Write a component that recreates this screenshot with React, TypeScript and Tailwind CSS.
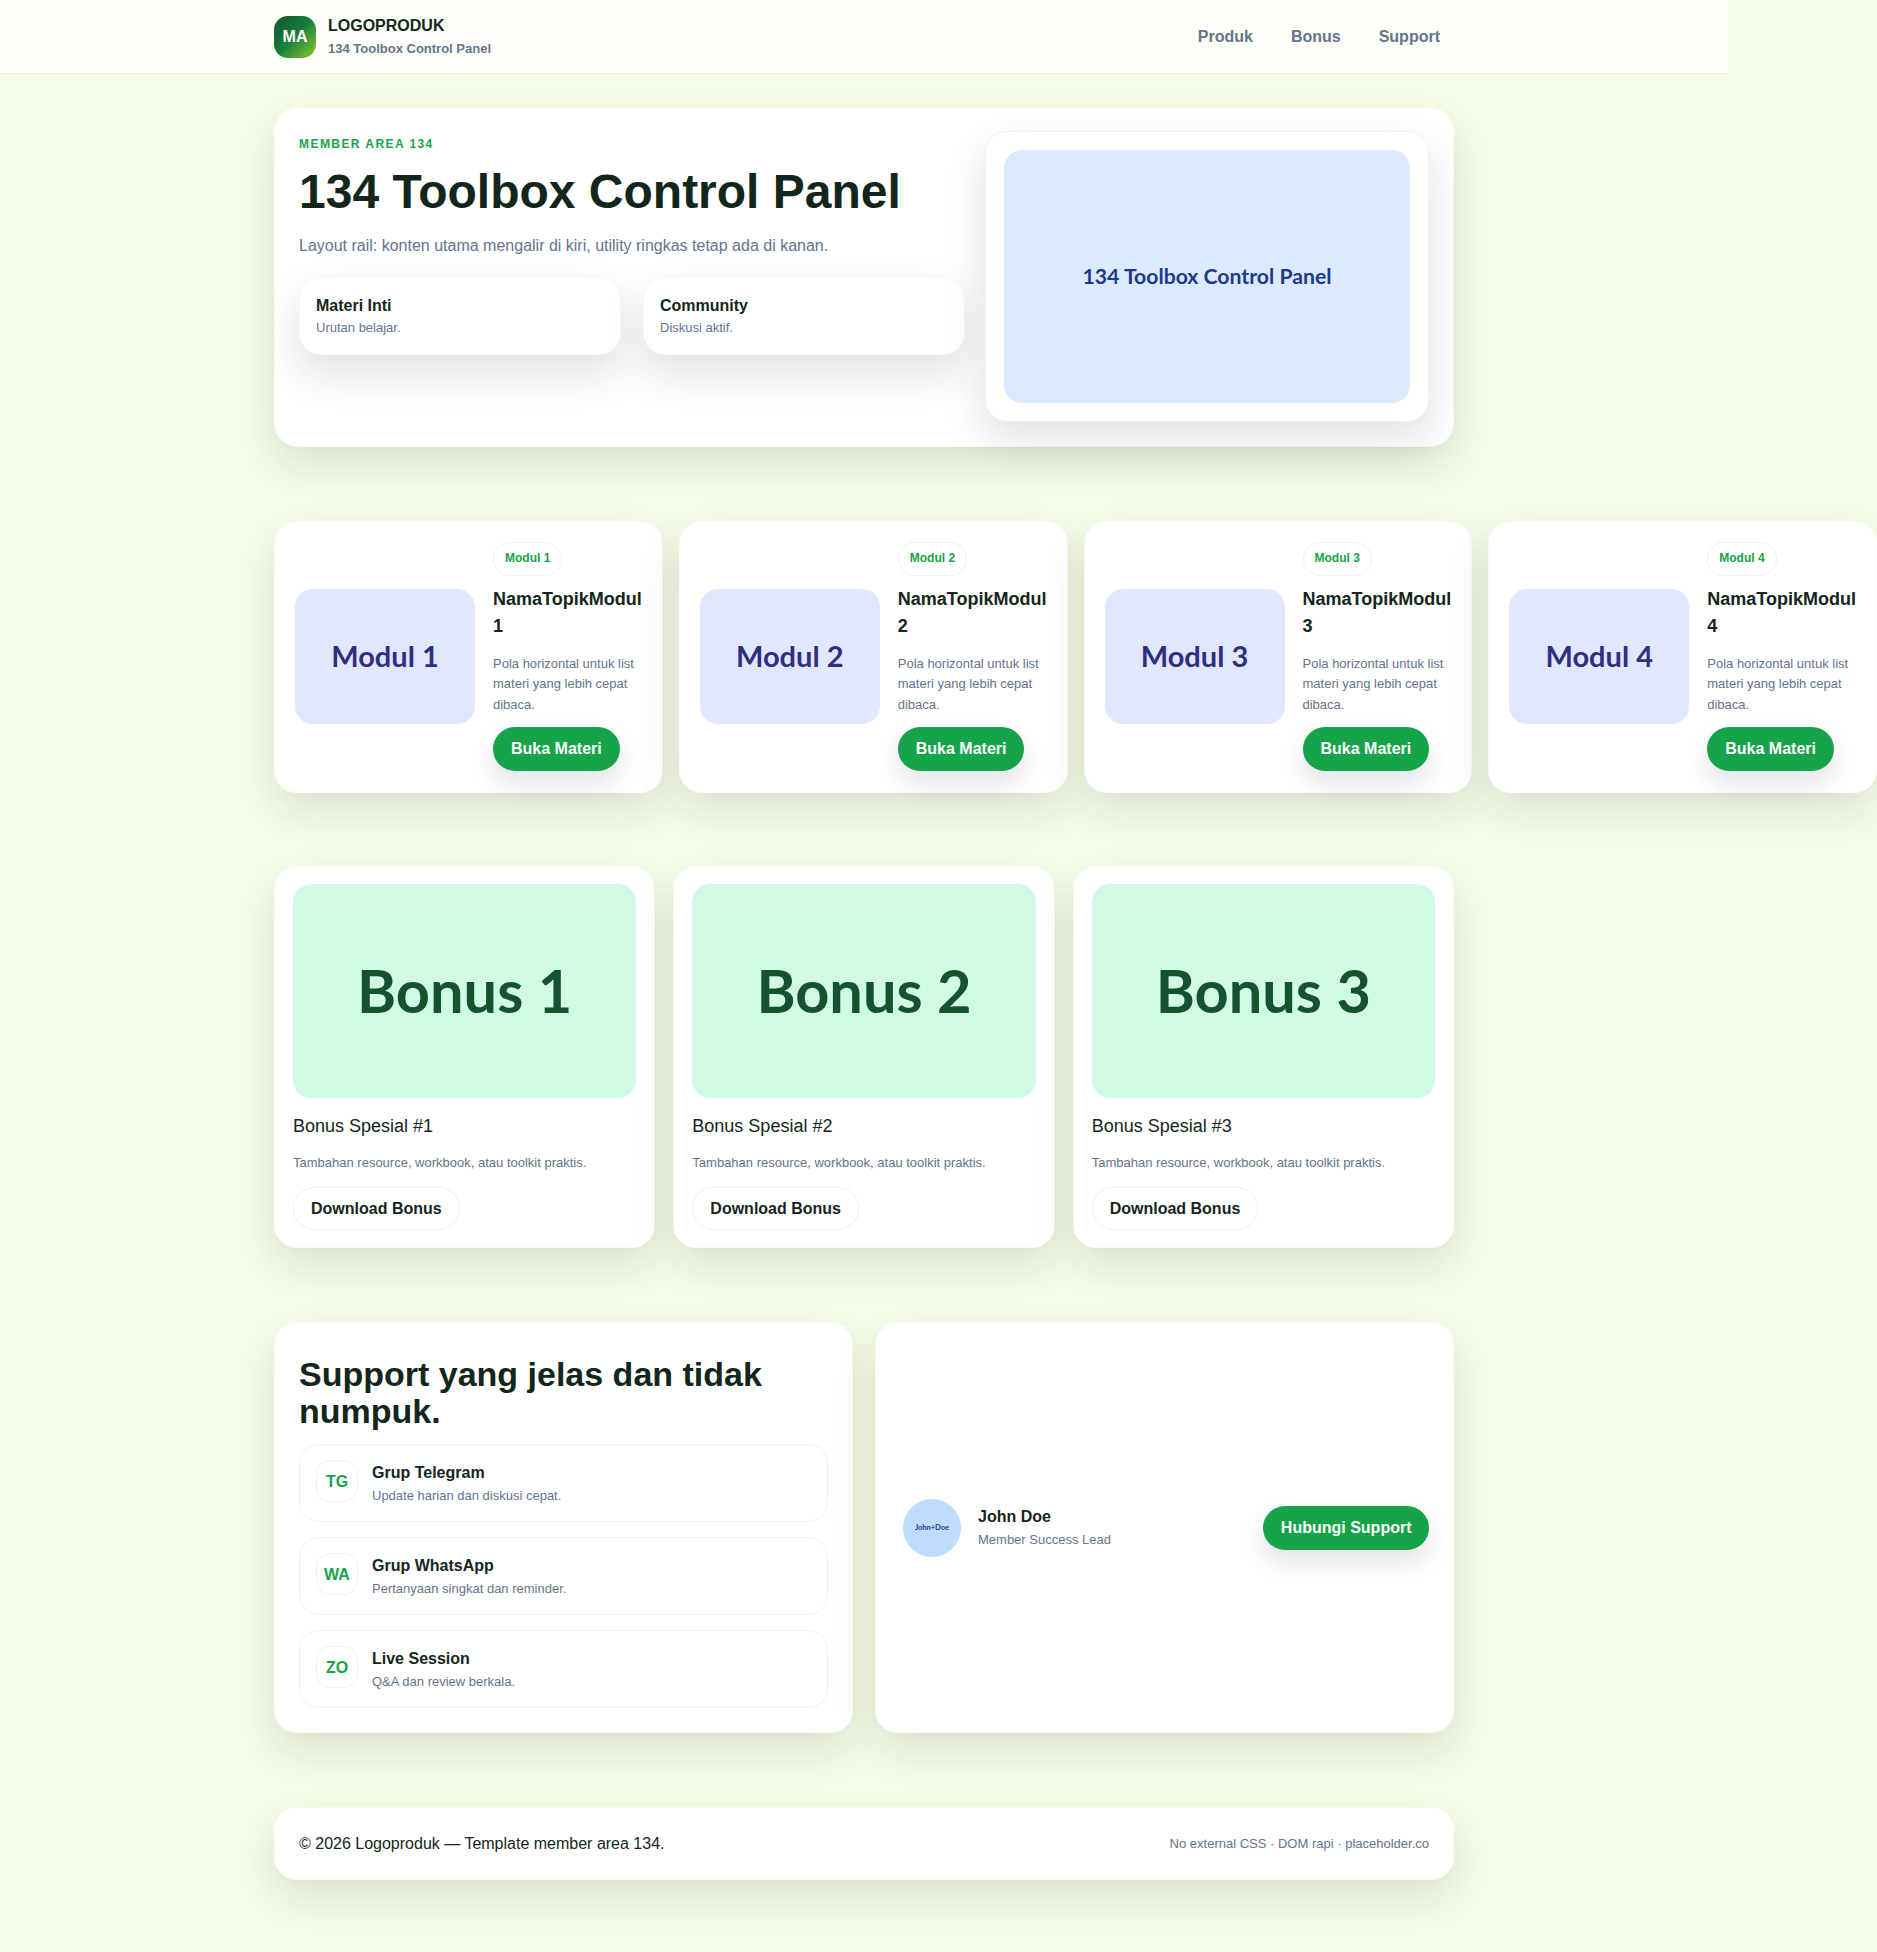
const modules = [1, 2, 3, 4];
const bonuses = [1, 2, 3];
const supports = [
  { code: "TG", title: "Grup Telegram", desc: "Update harian dan diskusi cepat." },
  { code: "WA", title: "Grup WhatsApp", desc: "Pertanyaan singkat dan reminder." },
  { code: "ZO", title: "Live Session", desc: "Q&A dan review berkala." },
];
const minis = [
  { title: "Materi Inti", desc: "Urutan belajar." },
  { title: "Community", desc: "Diskusi aktif." },
];

export default function App() {
  return (
    <div className="min-h-[1952px] w-full bg-[#f7fee7] font-['Liberation_Sans',Arial,sans-serif] text-[16px] leading-[1.6] text-[#13261c]">
      <div className="w-[1728px]">
        {/* Navbar */}
        <header className="h-[74px] border-b border-[#eef0ea] bg-[#fdfff9] shadow-[0_4px_4px_rgba(20,40,20,0.01)]">
          <div className="mx-auto flex h-full w-[1180px] items-center justify-between">
            <div className="flex items-center gap-3">
              <div className="flex h-[42px] w-[42px] items-center justify-center rounded-[14px] bg-gradient-to-br from-[#14532d] via-[#15803d] to-[#84cc16] text-[16px] font-bold text-white">
                MA
              </div>
              <div className="pt-px">
                <div className="text-[16px] leading-[1.3] font-bold">LOGOPRODUK</div>
                <div className="mt-[4px] text-[13px] leading-[1.3] font-bold text-[#64748b]">134 Toolbox Control Panel</div>
              </div>
            </div>
            <nav className="flex items-center gap-[38px] pr-[14px] text-[16px] font-bold text-[#64748b]">
              <a href="#">Produk</a>
              <a href="#">Bonus</a>
              <a href="#">Support</a>
            </nav>
          </div>
        </header>

        <main className="mx-auto flex w-[1180px] flex-col gap-[73.5px] pt-[33px]">
          {/* Hero */}
          <section className="grid h-[340px] grid-cols-[1.5fr_1fr] gap-5 rounded-[24px] border border-[#f8faf5] bg-white px-6 pt-[23px] pb-6 shadow-[0_18px_40px_rgba(15,23,42,0.13)]">
            <div>
              <div className="mt-[4px] text-[12px] leading-[1.6] font-bold tracking-[0.12em] text-[#16a34a] uppercase">Member Area 134</div>
              <h1 className="mt-[11.5px] text-[48px] leading-[1.1] font-bold text-[#13261c]">134 Toolbox Control Panel</h1>
              <p className="mt-[15px] text-[16px] text-[#64748b]">Layout rail: konten utama mengalir di kiri, utility ringkas tetap ada di kanan.</p>
              <div className="mt-[18px] grid grid-cols-2 gap-[22px]">
                {minis.map((m) => (
                  <div key={m.title} className="flex h-[78px] flex-col justify-center rounded-[22px] border border-[#f8faf9] bg-white px-4 shadow-[0_18px_40px_rgba(15,23,42,0.13)]">
                    <div className="text-[16px] font-bold">{m.title}</div>
                    <div className="text-[13px] text-[#64748b]">{m.desc}</div>
                  </div>
                ))}
              </div>
            </div>
            <div className="rounded-[22px] border border-[#f1f2f4] bg-white p-[18px] shadow-[0_18px_40px_rgba(15,23,42,0.13)]">
              <div className="flex h-full items-center justify-center rounded-[18px] bg-[#dbeafe] font-['Lato',sans-serif] text-[21.2px] font-bold text-[#1e3a8a]">
                134 Toolbox Control Panel
              </div>
            </div>
          </section>

          {/* Modules: the row runs past the container on purpose */}
          <section className="flex w-[1603px] gap-4">
            {modules.map((n) => (
              <article key={n} className="flex h-[272px] w-[388.75px] shrink-0 items-center gap-[18px] rounded-[22px] border border-[#f8faf5] bg-white p-5 shadow-[0_18px_40px_rgba(15,23,42,0.13)]">
                <div className="flex h-[135px] w-[180px] shrink-0 items-center justify-center rounded-[18px] bg-[#e0e7ff] font-['Lato',sans-serif] text-[29px] font-bold text-[#312e81]">
                  Modul {n}
                </div>
                <div className="min-w-0 flex-1">
                  <span className="flex h-[34px] w-fit items-center rounded-full border border-[#eef2ee] bg-white px-[11px] text-[12px] font-bold text-[#16a34a]">Modul {n}</span>
                  <h3 className="mt-[10.5px] text-[18px] leading-[27px] font-bold">NamaTopikModul {n}</h3>
                  <p className="mt-[13.5px] text-[13px] leading-[20.4px] text-[#64748b]">Pola horizontal untuk list materi yang lebih cepat dibaca.</p>
                  <button className="mt-[12px] block h-[44px] rounded-full bg-[#16a34a] px-[18px] text-[16px] font-bold text-white shadow-[0_12px_24px_rgba(15,23,42,0.12)]">Buka Materi</button>
                </div>
              </article>
            ))}
          </section>

          {/* Bonus */}
          <section className="grid grid-cols-3 gap-[18px]">
            {bonuses.map((n) => (
              <article key={n} className="rounded-[22px] border border-[#f8faf5] bg-white px-[18px] py-[17px] shadow-[0_18px_40px_rgba(15,23,42,0.13)]">
                <div className="flex h-[214px] items-center justify-center rounded-[18px] bg-[#d1fae5] font-['Lato',sans-serif] text-[59.5px] font-bold text-[#14532d]">
                  Bonus {n}
                </div>
                <h3 className="mt-[13.5px] text-[18px] leading-[1.6] font-normal">Bonus Spesial #{n}</h3>
                <p className="mt-[13px] text-[13px] leading-[20.8px] text-[#64748b]">Tambahan resource, workbook, atau toolkit praktis.</p>
                <button className="mt-[12.5px] block h-[43.5px] rounded-full border border-[#eef0ee] bg-white px-[17px] text-[16px] font-bold text-[#13261c]">Download Bonus</button>
              </article>
            ))}
          </section>

          {/* Support */}
          <section className="grid grid-cols-2 gap-[22px]">
            <div className="rounded-[22px] border border-[#f8faf5] bg-white p-6 shadow-[0_18px_40px_rgba(15,23,42,0.13)]">
              <h2 className="mt-[9px] text-[34px] leading-[37.4px] font-bold text-[#13261c]">Support yang jelas dan tidak numpuk.</h2>
              <div className="mt-[14px] flex flex-col gap-[15px]">
                {supports.map((s) => (
                  <div key={s.code} className="flex h-[78px] items-start gap-[14px] rounded-[20px] border border-[#f0f2f0] bg-white px-4 pt-[15px]">
                    <div className="flex h-[42px] w-[42px] shrink-0 items-center justify-center rounded-[14px] border border-[#f0f2f0] text-[16px] font-bold text-[#16a34a]">{s.code}</div>
                    <div>
                      <div className="text-[16px] font-bold">{s.title}</div>
                      <div className="text-[13px] text-[#64748b]">{s.desc}</div>
                    </div>
                  </div>
                ))}
              </div>
            </div>
            <div className="flex items-center justify-between rounded-[22px] border border-[#f8faf5] bg-white py-6 pr-6 pl-[27px] shadow-[0_18px_40px_rgba(15,23,42,0.13)]">
              <div className="flex items-center gap-[17px]">
                <div className="flex h-[58px] w-[58px] items-center justify-center rounded-full bg-[#bfdbfe] font-['Lato',sans-serif] text-[7.5px] font-bold text-[#1e3a8a]">John+Doe</div>
                <div>
                  <div className="text-[16px] font-bold">John Doe</div>
                  <div className="text-[13px] text-[#64748b]">Member Success Lead</div>
                </div>
              </div>
              <button className="h-[44px] rounded-full bg-[#16a34a] px-[17.5px] text-[16px] font-bold text-white shadow-[0_12px_24px_rgba(15,23,42,0.12)]">Hubungi Support</button>
            </div>
          </section>

          {/* Footer */}
          <footer className="flex h-[73px] items-center justify-between rounded-[22px] border border-[#f8faf5] bg-white px-6 shadow-[0_18px_40px_rgba(15,23,42,0.13)]">
            <div className="text-[16px]">© 2026 Logoproduk — Template member area 134.</div>
            <div className="pt-px text-[13px] text-[#64748b]">No external CSS · DOM rapi · placeholder.co</div>
          </footer>
        </main>
      </div>
    </div>
  );
}
